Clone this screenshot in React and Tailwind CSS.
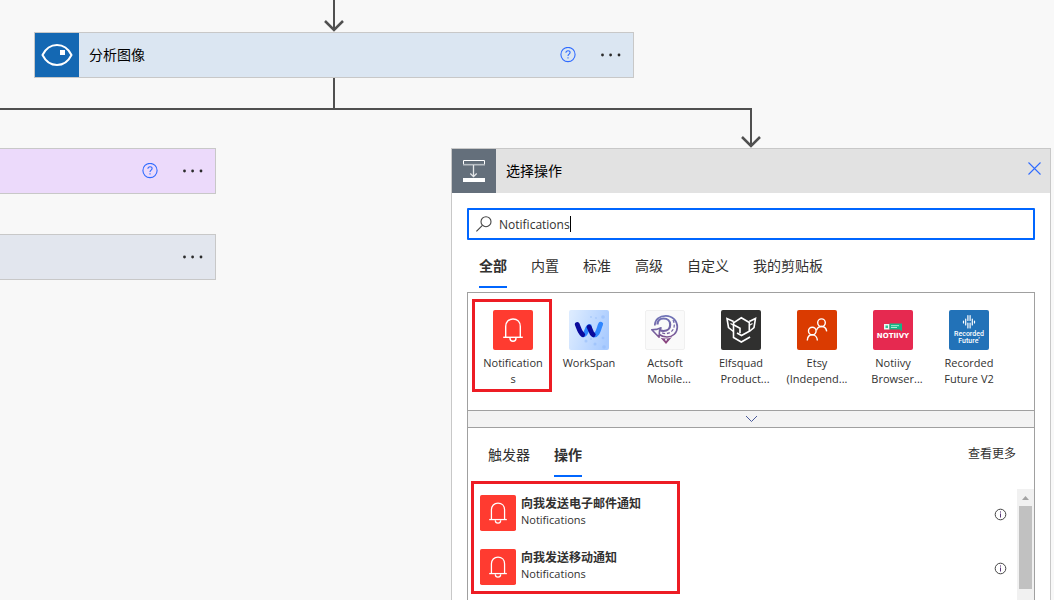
import React from "react";

const CATEGORIES = ["全部", "内置", "标准", "高级", "自定义", "我的剪贴板"];

function HelpIcon() {
  return (
    <svg width="16" height="16" viewBox="0 0 16 16" fill="none" stroke="#2f6bff" strokeWidth="1.1">
      <circle cx="8" cy="7.5" r="7.1" />
      <path d="M5.9 5.8C5.9 4.5 6.8 3.8 8 3.8S10.1 4.500 10.1 5.600C10.1 7.100 8 7.200 8 9" />
      <path d="M8 10.2v1.2" />
    </svg>
  );
}

function DotsIcon() {
  return (
    <svg width="20" height="16" viewBox="0 0 20 16" fill="#2b2b2b">
      <circle cx="1.5" cy="8" r="1.4" />
      <circle cx="9.6" cy="8" r="1.4" />
      <circle cx="18" cy="8" r="1.4" />
    </svg>
  );
}

function EyeIcon() {
  return (
    <svg width="44" height="44" viewBox="0 0 44 44" className="shrink-0 bg-[#1468b3]">
      <path
        d="M7.5 22C11 15 16.5 12 22 12s11 3 14.5 10C33 29 27.500 32 22 32S11 29 7.500 22Z"
        fill="none"
        stroke="#fff"
        strokeWidth="2"
        strokeLinejoin="round"
      />
      <rect x="25" y="17" width="5" height="5" fill="#fff" />
    </svg>
  );
}

function ActionIcon() {
  return (
    <svg width="44" height="44" viewBox="0 0 44 44" fill="none" className="shrink-0 bg-[#646f7b]">
      <path d="M11.500 16V11.500h21V16" stroke="#fff" />
      <path d="M11 15.700h22" stroke="#b9bfc5" strokeWidth="1.600" />
      <path d="M21.500 16v11.500M18.300 24.500l3.200 3.200 3.200-3.200" stroke="#e4e6e8" strokeWidth="1.300" />
      <rect x="11" y="29" width="22" height="4" fill="#fff" />
    </svg>
  );
}

function BellIcon({ size }) {
  return (
    <svg width={size} height={size} viewBox="0 0 40 40" fill="none" className="shrink-0">
      <rect width="40" height="40" rx="2" fill="#ff3b30" />
      <path d="M12.700 27V16.500C12.700 12 15.700 9 20 9s7.300 3 7.300 7.500V27" stroke="#fff" strokeWidth="1.400" />
      <path d="M10.200 27.300h19.600" stroke="#fff" strokeWidth="1.400" />
      <path d="M17 28c0 2 1.200 3.200 3 3.200s3-1.200 3-3.200" stroke="#fff" strokeWidth="1.400" />
    </svg>
  );
}

function WorkSpanIcon() {
  return (
    <svg width="40" height="40" viewBox="0 0 40 40" fill="none">
      <defs>
        <linearGradient id="ws" x1="0" y1="0.300" x2="1" y2="0.600">
          <stop offset="0" stopColor="#dcebff" />
          <stop offset="1" stopColor="#a9cbff" />
        </linearGradient>
      </defs>
      <rect width="40" height="40" rx="2" fill="url(#ws)" />
      <g fill="#8fb9fa" opacity="0.500">
        <circle cx="34" cy="7" r="1.800" />
        <circle cx="22" cy="7" r="0.900" />
        <circle cx="27" cy="8" r="0.900" />
        <circle cx="17" cy="31" r="1.500" />
        <circle cx="26" cy="34" r="1.500" />
        <circle cx="34" cy="28" r="1.300" />
        <circle cx="35" cy="37" r="1.800" />
        <circle cx="22" cy="29" r="0.900" />
      </g>
      <g strokeWidth="4.800" strokeLinecap="round">
        <path d="M14.300 24.800c3.400.2 3.300-8 6.200-8.300M24.700 25c4.500.3 4.800-6.500 7-10.800" stroke="#2f86ff" />
        <path d="M8.300 14.500C9.800 18 10.800 22.500 13.700 24.700M20 17c1.500 1.600 1.800 5.800 4.200 7.700" stroke="#0b0a9c" />
      </g>
    </svg>
  );
}

function ActsoftIcon() {
  return (
    <svg width="40" height="40" viewBox="0 0 40 40" fill="none">
      <defs>
        <linearGradient id="as" x1="0" y1="5" x2="0" y2="34" gradientUnits="userSpaceOnUse">
          <stop offset="0" stopColor="#6f74b8" />
          <stop offset="0.600" stopColor="#74609f" />
          <stop offset="1" stopColor="#8f3f78" />
        </linearGradient>
      </defs>
      <rect x="0.500" y="0.500" width="39" height="39" rx="1.500" fill="#fafafa" stroke="#f0f0f0" />
      <g stroke="url(#as)">
        <path d="M9.800 15.500C9.800 9.500 14.500 5.800 20.800 5.800c6.800 0 11.500 5 11.500 11.200 0 6-4.700 10-10.300 10-3 0-5.500-.8-7.700-2.500" strokeWidth="1.700" />
        <path d="M12.500 14.500c0-3.600 2.500-6 6-6 4 0 6.700 2.600 6.700 6.200 0 3.800-2.800 6.300-6.700 6.300-1.600 0-3-.4-4.200-1.300" strokeWidth="2.200" />
        <path d="M28 10c2.300 4.500 1.500 9.500-2.500 12.200-2.600 1.700-5.700 1.700-8.500.7" strokeWidth="1.300" strokeDasharray="3 1.800" />
        <path d="M6.800 19.700l4.600-.3 4.600-1.600-1.500 3.200-.4 6.200-3.200-3.200Z" strokeWidth="1.600" strokeLinejoin="round" />
      </g>
      <path d="M15.500 27.800c3.600 1.200 8.200 1 11.500-.8L21 34Z" fill="url(#as)" />
      <circle cx="21" cy="29.700" r="1" fill="#fafafa" />
    </svg>
  );
}

function ElfsquadIcon() {
  return (
    <svg width="40" height="40" viewBox="0 0 40 40" fill="none">
      <rect width="40" height="40" rx="2" fill="#30302f" />
      <g stroke="#fff" strokeWidth="1.600">
        <path d="M12.500 12.800L20.300 7.800l8 4.700v8.700l-7.800 4.300-4.500-2.500" />
        <path d="M12.500 11.500V27.500l7.800 4.500 8.800-5" />
        <path d="M12.500 14.800l6.500 3.400v5" />
        <path d="M12.500 11.500L6 8.500 7.500 17.500l5 4" />
        <path d="M28.300 11.500L34.500 8.500 33 17.500l-4.700 4" />
        <path d="M9.500 13.500l3 1.800M31.500 13.500l-3 1.800" strokeWidth="1.100" />
      </g>
    </svg>
  );
}

function EtsyIcon() {
  return (
    <svg width="40" height="40" viewBox="0 0 40 40" fill="none">
      <rect width="40" height="40" rx="2" fill="#da3b01" />
      <g stroke="#fff" strokeWidth="1.400">
        <circle cx="15.300" cy="21" r="3.800" />
        <path d="M10.300 30.500c.2-3.300 2.200-5.700 5-5.700s4.900 2.400 5.100 5.700" />
        <circle cx="24.500" cy="12.700" r="3.800" />
        <path d="M19.500 20.300c.8-2.400 2.600-3.800 5-3.800 2.800 0 4.800 1.900 5.200 4.900" />
      </g>
    </svg>
  );
}

function NotiivyIcon() {
  return (
    <svg width="40" height="40" viewBox="0 0 40 40">
      <rect width="40" height="40" rx="2" fill="#e62950" />
      <rect x="11" y="14" width="5.500" height="5.500" fill="#e9fbf4" />
      <path d="M12.500 15.500h2.500v2.500h-2.500z" fill="#35bf95" />
      <path d="M16.500 13.500H29v8l-2.500-2h-10Z" fill="#12b886" />
      <path d="M18 15.700h8M18 17.500h6" stroke="#baf0dd" strokeWidth="0.900" />
      <text x="20" y="28" textAnchor="middle" fill="#fff" fontSize="7" fontWeight="700" fontFamily="DejaVu Sans, sans-serif">
        NOTIIVY
      </text>
    </svg>
  );
}

function RecordedFutureIcon() {
  return (
    <svg width="40" height="40" viewBox="0 0 40 40">
      <rect width="40" height="40" rx="2" fill="#2272b8" />
      <path
        d="M14.500 11v2M16.700 9v6M18.900 5.500v5M18.900 13v5M21.100 5.500v5M21.100 13v5M23.300 9v6M25.500 11v2"
        stroke="#fff"
        strokeWidth="1.200"
        strokeLinecap="round"
      />
      <g fill="#fff" fontSize="7" fontWeight="500" fontFamily="Roboto, sans-serif" textAnchor="middle">
        <text x="20" y="26">Recorded</text>
        <text x="20" y="33">Future’</text>
      </g>
    </svg>
  );
}

const CONNECTORS = [
  { icon: <BellIcon size={40} />, first: "Notification", second: "s" },
  { icon: <WorkSpanIcon />, first: "WorkSpan" },
  { icon: <ActsoftIcon />, first: "Actsoft", second: "Mobile...", cut: true },
  { icon: <ElfsquadIcon />, first: "Elfsquad", second: "Product...", cut: true },
  { icon: <EtsyIcon />, first: "Etsy", second: "(Independ..." },
  { icon: <NotiivyIcon />, first: "Notiivy", second: "Browser...", cut: true },
  { icon: <RecordedFutureIcon />, first: "Recorded", second: "Future V2" },
];

const ACTIONS = ["向我发送电子邮件通知", "向我发送移动通知"];

function Card({ className, icon, title, help }) {
  return (
    <section className={`absolute flex h-[46px] w-[600px] items-center border border-[#c8c8c8] pr-3 ${className}`}>
      {icon}
      {title && <h2 className="pl-[10px] text-sm text-black">{title}</h2>}
      <div className="ml-auto flex items-center gap-[25px]">
        {help && (
          <button type="button" aria-label="帮助">
            <HelpIcon />
          </button>
        )}
        <button type="button" aria-label="更多">
          <DotsIcon />
        </button>
      </div>
    </section>
  );
}

function Tab({ label, active }) {
  return (
    <button
      type="button"
      role="tab"
      aria-selected={active}
      className={`h-12 border-b-2 pt-[6px] text-sm ${active ? "border-[#0066ff] font-bold" : "border-transparent"}`}
    >
      {label}
    </button>
  );
}

function ActionPicker() {
  return (
    <section className="absolute top-[148px] left-[451px] w-[600px] border border-[#c8c8c8] bg-white">
      <header className="flex h-11 items-center bg-[#e2e2e2] pr-2">
        <ActionIcon />
        <h2 className="pl-[10px] text-sm text-black">选择操作</h2>
        <button type="button" aria-label="关闭" className="mb-[6px] ml-auto">
          <svg width="15" height="15" viewBox="0 0 15 15" stroke="#2f6bff" strokeWidth="1.100">
            <path d="M1.500 1.500l12 12M13.500 1.500l-12 12" />
          </svg>
        </button>
      </header>

      <div className="px-[15px] pt-[15px]">
        <label className="flex h-8 items-center rounded-[1px] border-2 border-[#0066ff] pl-[7px]">
          <svg width="16" height="16" viewBox="0 0 16 16" fill="none" stroke="#444" strokeWidth="1.100">
            <circle cx="10" cy="5.700" r="5" />
            <path d="M6.400 9.300L0.400 15.300" />
          </svg>
          <input
            type="text"
            aria-label="搜索连接器和操作"
            defaultValue="Notifications"
            className="field-sizing-content pt-px pl-[7px] text-[12px] text-[#323130] caret-transparent outline-none"
          />
          <span className="h-4 w-px bg-black" />
        </label>

        <div role="tablist" className="flex gap-6 pl-3">
          {CATEGORIES.map((c, i) => (
            <Tab key={c} label={c} active={i === 0} />
          ))}
        </div>

        <div className="mt-1 border border-[#a0a0a0]">
          <div className="relative h-[117px] pt-[17px] pl-[7px]">
            <ul className="flex">
              {CONNECTORS.map((c) => (
                <li key={c.first} className="w-[76px]">
                  <button type="button" className="flex w-full flex-col items-center">
                    {c.icon}
                    <span className="mt-[5px] block w-full text-center text-[11px] leading-4 whitespace-nowrap">
                      {c.first}
                      <span className={`block ${c.cut ? "pl-2" : ""}`}>{c.second}</span>
                    </span>
                  </button>
                </li>
              ))}
            </ul>
            <div className="absolute top-[6px] left-1 h-[93px] w-20 border-3 border-[#ed1c24]" />
          </div>

          <button
            type="button"
            aria-label="展开"
            className="flex h-[18px] w-full items-center justify-center border-y border-[#a0a0a0] bg-[#f3f3f3]"
          >
            <svg width="13" height="8" viewBox="0 0 13 8" fill="none" stroke="#4a5a9a">
              <path d="M1 1l5.500 5.500L12 1" />
            </svg>
          </button>

          <div className="flex items-center pt-px pr-[18px] pl-5">
            <div role="tablist" className="flex gap-6">
              <Tab label="触发器" />
              <Tab label="操作" active />
            </div>
            <a href="#more" className="ml-auto pt-[2px] text-xs">
              查看更多
            </a>
          </div>

          <div className="relative mt-3 flex h-[300px]">
            <ul className="grow pt-[6px] pl-3">
              {ACTIONS.map((name) => (
                <li key={name} className="mb-[18px] flex items-center pr-[10px]">
                  <button type="button" className="flex grow gap-[5px] text-left">
                    <BellIcon size={36} />
                    <span className="flex flex-col pt-px">
                      <span className="text-xs leading-4 font-bold">{name}</span>
                      <span className="text-[11px] leading-4">Notifications</span>
                    </span>
                  </button>
                  <button type="button" aria-label="详细信息" className="pt-[3px]">
                    <svg width="13" height="13" viewBox="0 0 13 13" fill="none" stroke="#444" strokeWidth="1">
                      <circle cx="6.500" cy="6.500" r="5.300" />
                      <path d="M6.500 5.500v4M6.500 3.400v1.200" stroke="#5b3a7a" />
                    </svg>
                  </button>
                </li>
              ))}
            </ul>
            <div aria-hidden="true" className="flex w-[17px] flex-col items-center bg-[#f1f1f1]">
              <svg width="17" height="17" viewBox="0 0 17 17" fill="#a3a3a3">
                <path d="M5 11h7L8.500 7Z" />
              </svg>
              <div className="h-[83px] w-[13px] bg-[#c1c1c1]" />
            </div>
            <div className="absolute -top-2 left-[3px] h-[113px] w-[209px] border-3 border-[#ed1c24]" />
          </div>
        </div>
      </div>
    </section>
  );
}

export default function App() {
  return (
    <main className="relative h-screen overflow-hidden bg-[#f8f8f8] font-['Open_Sans','Noto_Sans_CJK_SC',sans-serif] text-[#323130]">
      <svg width="800" height="150" viewBox="0 0 800 150" fill="none" stroke="#505050" className="absolute top-0 left-0">
        <path d="M334 0V30M334 78V109M0 109H751V146" strokeWidth="2" />
        <path d="M325 21l9 9 9-9M742 137l9 9 9-9" strokeWidth="2.500" />
      </svg>

      <Card className="top-8 left-[34px] bg-[#dbe6f2]" icon={<EyeIcon />} title="分析图像" help />
      <Card className="top-[148px] -left-96 bg-[#ecdafb]" help />
      <Card className="top-[234px] -left-96 bg-[#e2e6ee]" />
      <ActionPicker />
    </main>
  );
}
